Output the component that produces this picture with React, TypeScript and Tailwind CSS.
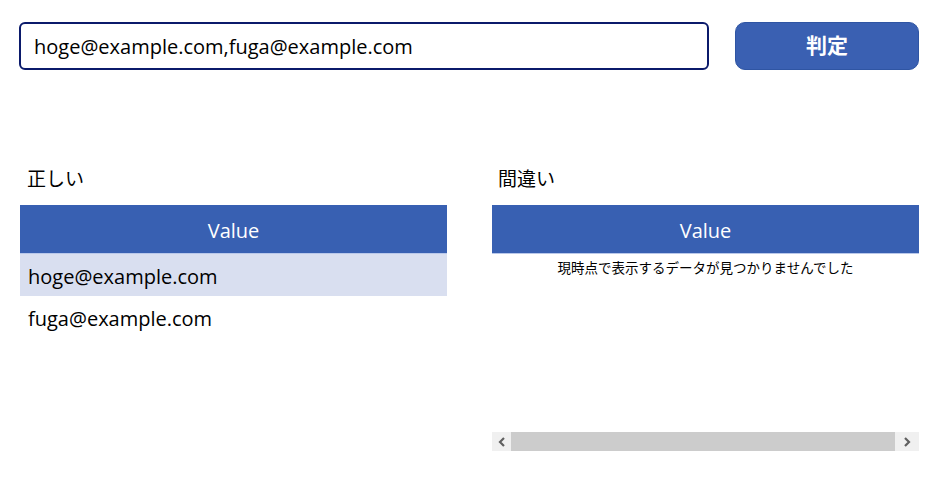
import React from "react";

const font = { fontFamily: '"Open Sans", "Noto Sans CJK JP", sans-serif' };

function Header() {
  return (
    <div className="flex h-[49px] items-center justify-center border-b border-[#b9c8ea] bg-[#3860b2] pt-[3px] text-[20px] text-white">
      Value
    </div>
  );
}

export default function App() {
  const correct = ["hoge@example.com", "fuga@example.com"];

  return (
    <div className="h-[479px] w-[947px] bg-white text-black" style={font}>
      {/* Input row */}
      <div className="flex gap-[26px] pl-[19px] pr-[28px] pt-[22px]">
        <div className="flex h-[48px] w-[690px] items-center rounded-[6px] border-2 border-[#0b1a6b] pl-[13px] pt-[2px] text-[20px]">
          hoge@example.com,fuga@example.com
        </div>
        <button className="flex h-[48px] w-[184px] items-center justify-center rounded-[10px] border border-[#2f55a3] bg-[#3a60b2] text-[21px] font-bold text-white">
          判定
        </button>
      </div>

      {/* Results */}
      <div className="mt-[96px] flex gap-[45px] pl-[20px] pr-[28px]">
        <div className="flex w-[427px] flex-col">
          <div className="h-[39px] pl-[7px] text-[19px] leading-[26px]">正しい</div>
          <Header />
          {correct.map((v, i) => (
            <div
              key={v}
              className={`flex h-[42px] items-center pl-[8px] pt-[4px] text-[20px] ${i === 0 ? "bg-[#d9dff0]" : ""}`}
            >
              {v}
            </div>
          ))}
        </div>

        <div className="flex w-[427px] flex-col">
          <div className="h-[39px] pl-[6px] text-[19px] leading-[26px]">間違い</div>
          <Header />
          <div className="flex h-[178px] justify-center pt-[4px] text-[13.5px]">
            現時点で表示するデータが見つかりませんでした
          </div>
          <div className="flex h-[19px] bg-[#f0f0f0]">
            <div className="flex w-[19px] items-center justify-center">
              <svg width="8" height="10" viewBox="0 0 8 10">
                <path d="M6 1 L2 5 L6 9" fill="none" stroke="#606060" strokeWidth="2.2" />
              </svg>
            </div>
            <div className="flex-1 bg-[#cccccc]" />
            <div className="flex w-[24px] items-center justify-center">
              <svg width="8" height="10" viewBox="0 0 8 10">
                <path d="M2 1 L6 5 L2 9" fill="none" stroke="#606060" strokeWidth="2.2" />
              </svg>
            </div>
          </div>
        </div>
      </div>
    </div>
  );
}
